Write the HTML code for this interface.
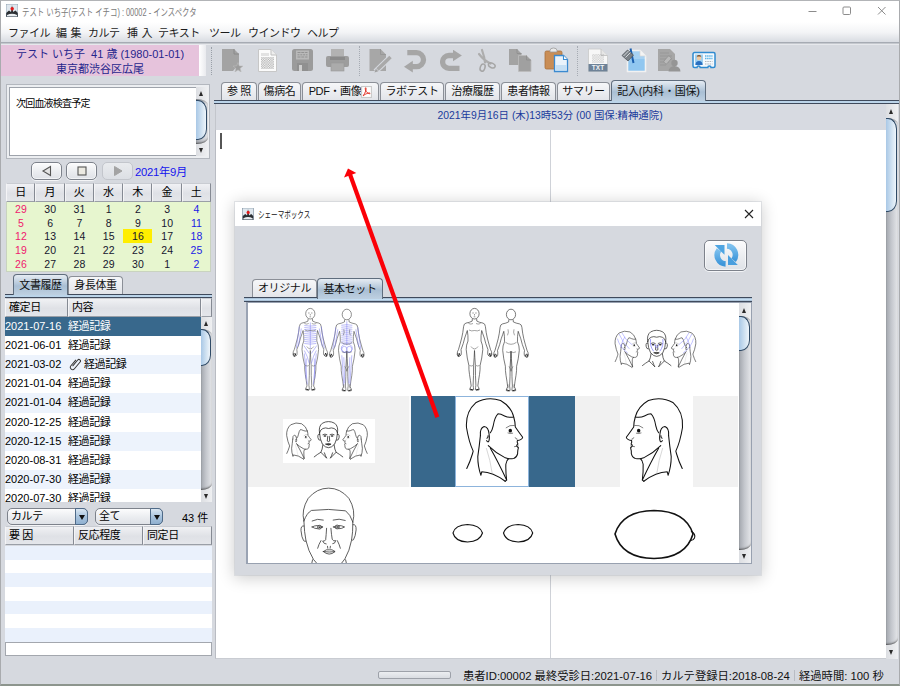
<!DOCTYPE html>
<html lang="ja">
<head>
<meta charset="utf-8">
<title>インスペクタ</title>
<style>
html,body{margin:0;padding:0;}
body{width:900px;height:686px;overflow:hidden;position:relative;background:#d6d9df;
 font-family:"Liberation Sans","Noto Sans CJK JP",sans-serif;font-size:11px;color:#000;}
.abs{position:absolute;}
div,span{box-sizing:border-box;}
#win{position:absolute;left:0;top:0;width:900px;height:686px;border:1px solid #a9abae;border-top:1px solid #b2b4b7;border-bottom:2px solid #8d958d;background:#d6d9df;overflow:hidden;}
#titlebar{position:absolute;left:0;top:0;width:898px;height:22px;background:#fff;}
#titlebar .t{position:absolute;left:21px;top:3px;font-size:10px;color:#7a7a7a;white-space:nowrap;transform-origin:0 0;transform:scaleX(.74);}
#menubar{position:absolute;left:0;top:21px;width:898px;height:23px;background:linear-gradient(#ffffff,#f3f4f6 45%,#d9dce2 86%,#a6abb3 89%,#a6abb3 93%,#e6e8ec 94%);}
#menubar span{position:absolute;top:2px;word-spacing:1.5px;font-size:11px;white-space:nowrap;color:#1c1c1c;letter-spacing:-0.5px;}
#pink{position:absolute;left:0;top:44px;width:198px;height:31px;background:#e6c3dc;color:#26268c;text-align:center;font-size:11px;line-height:15px;padding-top:2px;white-space:nowrap;}
.tab{position:absolute;height:19px;border:1px solid #8b8f97;border-bottom:none;border-radius:4px 4px 0 0;background:linear-gradient(#f6f7f9,#e2e4e9);font-size:11px;text-align:center;line-height:17px;white-space:nowrap;color:#111;letter-spacing:-0.4px;}
.tab.sel{z-index:2;background:linear-gradient(#e6ecf3,#a9bfd4 55%,#bed0e1);border-color:#5f6d7d;}
.tabline{position:absolute;height:4px !important;border-top:1px solid #3f4a5c;border-bottom:1px solid #3f4a5c;background:linear-gradient(#8fa3b9 0,#c4def3 30%,#c4def3 70%,#8fa3b9);}
.hdr{position:absolute;background:linear-gradient(#f0f1f4,#dfe1e6 55%,#e4e6ea);border:1px solid #9a9fa7;border-top-color:#c9ccd2;border-left-color:#f4f4f6;border-right-color:#858a93;font-size:11px;line-height:15px;padding-left:3px;white-space:nowrap;overflow:hidden;letter-spacing:-0.4px;}
.sb{position:absolute;background:linear-gradient(90deg,#dcdee2,#eff0f2);overflow:hidden;}
.sbt{position:absolute;left:0;width:100%;background:linear-gradient(90deg,#a2a6ad,#c4c7cd 45%,#dcdee2 85%,#e6e7ea);border-radius:0 11px 11px 0 / 0 6px 6px 0;box-shadow:inset 0 -2px 2px -1px rgba(40,40,40,.7),inset 0 2px 2px -1px rgba(40,40,40,.35);}
.sbthumb{position:absolute;border:1.3px solid #2f4a66;border-left:none;border-radius:0 9px 9px 0 / 0 11px 11px 0;background:linear-gradient(90deg,#a9c8e6,#cfe1f1 55%,#eef5fb);}
.sbarrow{position:absolute;background:transparent;}
.sbarrow i{position:absolute;left:50%;top:50%;width:0;height:0;border-left:2.8px solid transparent;border-right:2.8px solid transparent;margin-left:-2.8px;}
.sbarrow.up i{border-bottom:5px solid #2a2a2a;margin-top:-2px;}
.sbarrow.dn i{border-top:5px solid #2a2a2a;margin-top:-2.5px;}
.row{position:absolute;left:5px;width:196px;height:19px;line-height:19px;white-space:nowrap;font-size:11px;overflow:hidden;}
.row .d{position:absolute;left:0;top:0;}
.row .c{position:absolute;left:63px;top:0;letter-spacing:-0.4px;}
.cal{position:absolute;font-size:10.5px;text-align:center;width:29px;height:14px;line-height:14px;color:#111;}
.btn{position:absolute;border:1px solid #7d828b;border-radius:5px;background:linear-gradient(#fcfcfd,#eceef1 50%,#dfe2e7);box-shadow:0 1px 0 #f4f5f7,inset 0 0 0 1px rgba(255,255,255,.6);}
.combo{position:absolute;height:17px;border:1px solid #7d828b;border-radius:5px;background:linear-gradient(#fcfcfd,#eceef1 50%,#dfe2e7);box-shadow:0 1px 0 #f4f5f7;font-size:11px;line-height:15px;padding-left:3px;letter-spacing:-0.4px;}
.combo b{box-sizing:border-box;position:absolute;right:-1px;top:-1px;width:13px;height:17px;border:1px solid #4e6a88;border-radius:0 5px 5px 0;background:linear-gradient(#dbe7f2,#a9c4de 50%,#8fb0d0);}
.st{font-size:11.3px;white-space:nowrap;color:#111;}
.combo b i{position:absolute;left:2.5px;top:5.5px;width:0;height:0;border-left:3px solid transparent;border-right:3px solid transparent;border-top:5px solid #111;}
</style>
</head>
<body>
<div id="win">
<div id="titlebar"><svg class="abs" style="left:5px;top:3px" width="12" height="13" viewBox="0 0 12 13"><rect x="0" y="0" width="12" height="13" fill="#dfe7ee"/><path d="M0 13 V9 L3 6.5 L5 8 L6 1 L7.2 8 L9.5 6.5 L12 9 V13 Z" fill="#2b2f33"/><path d="M1 11 Q6 8.5 11 11 L11 12.5 H1Z" fill="#e9eef2"/><circle cx="6.2" cy="4.8" r="1.7" fill="#e01818"/><rect x="0" y="0" width="12" height="13" fill="none" stroke="#7d8fa0" stroke-width=".7"/></svg><span class="t">テスト いち子(テスト イチコ) : 00002 - インスペクタ</span><svg class="abs" style="left:800px;top:0" width="98" height="22" viewBox="0 0 98 22"><g stroke="#8c8c8c" stroke-width="1" fill="none"><path d="M7.5 10.5 H15.5"/><rect x="42" y="6" width="7.5" height="7.5" rx="1"/><path d="M77 6 L84.5 13.5 M84.5 6 L77 13.5"/></g></svg></div>
<div id="menubar"><span style="left:7px">ファイル</span><span style="left:55px">編 集</span><span style="left:87px">カルテ</span><span style="left:126px">挿 入</span><span style="left:157px">テキスト</span><span style="left:208px">ツール</span><span style="left:247px">ウインドウ</span><span style="left:306px">ヘルプ</span></div>
<div id="pink">テスト いち子&nbsp; 41 歳 (1980-01-01)<br>東京都渋谷区広尾</div>
<div class="abs" style="left:198px;top:44px;width:7px;height:31px;background:linear-gradient(90deg,#fff,#e9eaee)"></div>
<div class="abs" style="left:210px;top:46px;width:0;height:28px;border-left:1px dotted #9aa0a8"></div>
<div class="abs" style="left:5px;top:83px;width:204px;height:75px;border:1px solid #b3b7be;background:#eceef1;padding:2px"><div style="width:100%;height:100%;border:1px solid #9ea3ab;background:#fff"></div></div>
<div class="abs" style="left:15px;top:94px;font-size:10px;letter-spacing:-0.8px;white-space:nowrap">次回血液検査予定</div>
<div class="sb" style="left:195px;top:86px;width:12px;height:69px"><div class="sbt" style="top:12px;height:45px"></div><div class="sbarrow up" style="left:0;top:0;width:12px;height:12px"><i></i></div><div class="sbarrow dn" style="left:0;top:57px;width:12px;height:12px"><i></i></div><div class="sbthumb" style="left:0;top:13px;width:11px;height:40px"></div></div>
<div class="btn" style="left:30px;top:161px;width:31px;height:18px;"><svg class="abs" style="left:9px;top:2px" width="12" height="12"><path d="M9.5 1.5 L2 6 L9.5 10.5 Z" fill="#e4e4e4" stroke="#555" stroke-width="1.1"/></svg></div><div class="btn" style="left:65px;top:161px;width:31px;height:18px;"><svg class="abs" style="left:9px;top:2px" width="12" height="12"><rect x="2" y="2" width="8" height="8" fill="#eceae2" stroke="#555" stroke-width="1.1"/></svg></div><div class="btn" style="left:101px;top:161px;width:31px;height:18px;border-color:#c3c6cc;box-shadow:none;background:linear-gradient(#e9ebee,#dcdfe4);"><svg class="abs" style="left:9px;top:2px" width="12" height="12"><path d="M2.5 1.5 L10 6 L2.5 10.5 Z" fill="#a3a3a3" stroke="#a3a3a3"/></svg></div><div class="abs" style="left:134px;top:162px;font-size:11.3px;color:#1515ee;white-space:nowrap;letter-spacing:-0.3px">2021年9月</div>
<div class="hdr" style="left:5px;top:182px;width:29.25px;height:19px;text-align:center;padding:0;line-height:17px;font-size:11px">日</div><div class="hdr" style="left:34.25px;top:182px;width:29.25px;height:19px;text-align:center;padding:0;line-height:17px;font-size:11px">月</div><div class="hdr" style="left:63.5px;top:182px;width:29.25px;height:19px;text-align:center;padding:0;line-height:17px;font-size:11px">火</div><div class="hdr" style="left:92.75px;top:182px;width:29.25px;height:19px;text-align:center;padding:0;line-height:17px;font-size:11px">水</div><div class="hdr" style="left:122px;top:182px;width:29.25px;height:19px;text-align:center;padding:0;line-height:17px;font-size:11px">木</div><div class="hdr" style="left:151.25px;top:182px;width:29.25px;height:19px;text-align:center;padding:0;line-height:17px;font-size:11px">金</div><div class="hdr" style="left:180.5px;top:182px;width:29.25px;height:19px;text-align:center;padding:0;line-height:17px;font-size:11px">土</div>
<div class="abs" style="left:5px;top:201px;width:205px;height:70px;background:#e7f6cf;border:1px solid #c9d3bf;border-top:none"></div>
<div class="cal" style="left:5.4px;top:201px;color:#f0196e;">29</div><div class="cal" style="left:34.65px;top:201px;color:#15152e;">30</div><div class="cal" style="left:63.9px;top:201px;color:#15152e;">31</div><div class="cal" style="left:93.15px;top:201px;color:#15152e;">1</div><div class="cal" style="left:122.4px;top:201px;color:#15152e;">2</div><div class="cal" style="left:151.65px;top:201px;color:#15152e;">3</div><div class="cal" style="left:180.9px;top:201px;color:#1a1ae6;">4</div><div class="cal" style="left:5.4px;top:214.7px;color:#f0196e;">5</div><div class="cal" style="left:34.65px;top:214.7px;color:#15152e;">6</div><div class="cal" style="left:63.9px;top:214.7px;color:#15152e;">7</div><div class="cal" style="left:93.15px;top:214.7px;color:#15152e;">8</div><div class="cal" style="left:122.4px;top:214.7px;color:#15152e;">9</div><div class="cal" style="left:151.65px;top:214.7px;color:#15152e;">10</div><div class="cal" style="left:180.9px;top:214.7px;color:#1a1ae6;">11</div><div class="cal" style="left:5.4px;top:228.4px;color:#f0196e;">12</div><div class="cal" style="left:34.65px;top:228.4px;color:#15152e;">13</div><div class="cal" style="left:63.9px;top:228.4px;color:#15152e;">14</div><div class="cal" style="left:93.15px;top:228.4px;color:#15152e;">15</div><div class="cal" style="left:122.4px;top:228.4px;color:#15152e;background:#ffee00;">16</div><div class="cal" style="left:151.65px;top:228.4px;color:#15152e;">17</div><div class="cal" style="left:180.9px;top:228.4px;color:#1a1ae6;">18</div><div class="cal" style="left:5.4px;top:242.1px;color:#f0196e;">19</div><div class="cal" style="left:34.65px;top:242.1px;color:#15152e;">20</div><div class="cal" style="left:63.9px;top:242.1px;color:#15152e;">21</div><div class="cal" style="left:93.15px;top:242.1px;color:#15152e;">22</div><div class="cal" style="left:122.4px;top:242.1px;color:#15152e;">23</div><div class="cal" style="left:151.65px;top:242.1px;color:#15152e;">24</div><div class="cal" style="left:180.9px;top:242.1px;color:#1a1ae6;">25</div><div class="cal" style="left:5.4px;top:255.8px;color:#f0196e;">26</div><div class="cal" style="left:34.65px;top:255.8px;color:#15152e;">27</div><div class="cal" style="left:63.9px;top:255.8px;color:#15152e;">28</div><div class="cal" style="left:93.15px;top:255.8px;color:#15152e;">29</div><div class="cal" style="left:122.4px;top:255.8px;color:#15152e;">30</div><div class="cal" style="left:151.65px;top:255.8px;color:#15152e;">1</div><div class="cal" style="left:180.9px;top:255.8px;color:#1a1ae6;">2</div>
<div class="tab sel" style="left:12px;top:273px;width:55px;height:21px;line-height:20px">文書履歴</div><div class="tab" style="left:67px;top:275px;width:55px;height:18px">身長体重</div><div class="tabline" style="left:4px;top:293px;width:207px"></div>
<div class="hdr" style="left:4px;top:297px;width:63px;height:19px;line-height:16px">確定日</div><div class="hdr" style="left:67px;top:297px;width:133px;height:19px;line-height:16px">内容</div><div class="hdr" style="left:200px;top:297px;width:11px;height:19px;padding:0"></div>
<div class="abs" style="left:4px;top:316px;width:196px;height:185px;background:#fff;overflow:hidden"><div class="row" style="left:0;top:0px;height:19.2px;background:#38688c;color:#fff;"><span class="d">2021-07-16</span><span class="c">経過記録</span></div><div class="row" style="left:0;top:19.1px;height:19.2px;"><span class="d">2021-06-01</span><span class="c">経過記録</span></div><div class="row" style="left:0;top:38.2px;height:19.2px;background:#edf3fc;"><span class="d">2021-03-02</span><span class="c"><svg style="vertical-align:-3px;margin-left:1px;margin-right:3px" width="12" height="13" viewBox="0 0 12 13"><g transform="translate(6 6.5) rotate(40)"><path d="M-2.3 -4.2 V3.6 a2.3 2.3 0 0 0 4.6 0 V-5.2 a1.55 1.55 0 0 0 -3.1 0 V2.8" fill="none" stroke="#333" stroke-width="1"/></g></svg>経過記録</span></div><div class="row" style="left:0;top:57.3px;height:19.2px;"><span class="d">2021-01-04</span><span class="c">経過記録</span></div><div class="row" style="left:0;top:76.4px;height:19.2px;background:#edf3fc;"><span class="d">2021-01-04</span><span class="c">経過記録</span></div><div class="row" style="left:0;top:95.5px;height:19.2px;"><span class="d">2020-12-25</span><span class="c">経過記録</span></div><div class="row" style="left:0;top:114.6px;height:19.2px;background:#edf3fc;"><span class="d">2020-12-15</span><span class="c">経過記録</span></div><div class="row" style="left:0;top:133.7px;height:19.2px;"><span class="d">2020-08-31</span><span class="c">経過記録</span></div><div class="row" style="left:0;top:152.8px;height:19.2px;background:#edf3fc;"><span class="d">2020-07-30</span><span class="c">経過記録</span></div><div class="row" style="left:0;top:171.9px;height:19.2px;"><span class="d">2020-07-30</span><span class="c">経過記録</span></div></div>
<div class="sb" style="left:200px;top:316px;width:11px;height:185px"><div class="sbt" style="top:12px;height:161px"></div><div class="sbarrow up" style="left:0;top:0;width:11px;height:12px"><i></i></div><div class="sbarrow dn" style="left:0;top:173px;width:11px;height:12px"><i></i></div><div class="sbthumb" style="left:0;top:12px;width:10px;height:37px"></div></div>
<div class="combo" style="left:6px;top:507px;width:81px">カルテ<b><i></i></b></div><div class="combo" style="left:94px;top:507px;width:68px">全て<b><i></i></b></div><div class="abs" style="left:181px;top:508px;font-size:11px;white-space:nowrap">43 件</div>
<div class="hdr" style="left:4px;top:525px;width:69px;height:19px;line-height:17px">要 因</div><div class="hdr" style="left:73px;top:525px;width:69px;height:19px;line-height:17px">反応程度</div><div class="hdr" style="left:142px;top:525px;width:69px;height:19px;line-height:17px">同定日</div>
<div class="abs" style="left:4px;top:545px;width:207px;height:96px;background:repeating-linear-gradient(#eaf1fc 0,#eaf1fc 13.7px,#fff 13.7px,#fff 27.4px)"></div>
<div class="abs" style="left:4px;top:641px;width:207px;height:14px;border:1px solid #a3a7ae;background:#fff"></div>
<svg class="abs" style="left:220px;top:47px" width="23" height="24" viewBox="0 0 23 24"><path d="M1 1 H13 L18 6 V16 L12 23 H1 Z" fill="#a3a3a3"/><path d="M13 1 V6 H18" fill="none" stroke="#8a8a8a"/><path d="M17 14.5 L18.3 17.9 L21.9 18.1 L19.1 20.4 L20.1 23.9 L17 21.9 L13.9 23.9 L14.9 20.4 L12.1 18.1 L15.7 17.9 Z" fill="#9c9c9c" stroke="#bcbcbc" stroke-width=".6"/></svg><svg class="abs" style="left:256px;top:47px" width="21" height="25" viewBox="0 0 21 25"><defs><pattern id="chk" width="2.4" height="2.4" patternUnits="userSpaceOnUse"><rect width="1.2" height="1.2" fill="#9c9c9c"/><rect x="1.2" y="1.2" width="1.2" height="1.2" fill="#9c9c9c"/></pattern></defs><path d="M1.5 1.5 H14 L19.5 7 V23.5 H1.5 Z" fill="#fbfbfb" stroke="#c7c7c7"/><path d="M14 1.5 V7 H19.5" fill="#eee" stroke="#c0c0c0"/><path d="M4 5 H12 V8 H4Z" fill="#e2e2e2"/><rect x="4" y="9" width="13" height="12" fill="url(#chk)" opacity=".8"/></svg><svg class="abs" style="left:290px;top:47px" width="23" height="24" viewBox="0 0 23 24"><rect x="1" y="1" width="21" height="22" rx="2.5" fill="#9b9b9b"/><rect x="5" y="2.5" width="13" height="9" fill="#b9b9b9"/><path d="M6.5 4.5 H16.5 M6.5 9 H16.5" stroke="#8e8e8e" stroke-width=".9" stroke-dasharray="3 .8"/><path d="M6.5 6.8 H16.5" stroke="#8e8e8e" stroke-width=".9" stroke-dasharray="2 .8"/><rect x="6" y="15" width="11" height="8" fill="#909090"/><rect x="8" y="17" width="3" height="6" fill="#cfcfcf"/></svg><svg class="abs" style="left:324px;top:47px" width="25" height="24" viewBox="0 0 25 24"><rect x="6" y="1" width="13" height="8" fill="#b2b2b2"/><rect x="1" y="8" width="23" height="11" rx="2" fill="#9d9d9d"/><rect x="5" y="9" width="15" height="3" fill="#8a8a8a"/><rect x="6" y="15" width="13" height="8" fill="#ababab" stroke="#989898" stroke-width=".6"/></svg><div class="abs" style="left:358px;top:45px;width:0;height:30px;border-left:1px dotted #a6abb3"></div><svg class="abs" style="left:368px;top:47px" width="24" height="25" viewBox="0 0 24 25"><path d="M0.5 1 H11.5 L17 6.5 V23 H0.5 Z" fill="#a7a7a7"/><path d="M11.5 1 V6.5 H17" fill="none" stroke="#949494" stroke-width=".8"/><path d="M6.5 23.5 L21.5 9" stroke="#d6d9df" stroke-width="5.5"/><path d="M8.5 21.5 L21.5 9" stroke="#a9a9a9" stroke-width="3.4"/><path d="M5.5 24.5 L6.8 20.8 L9.3 23.3 Z" fill="#a0a0a0"/></svg><svg class="abs" style="left:403.2px;top:48.7px" width="23" height="23" viewBox="0 0 23 23"><path d="M3.3 2.7 H12.5 A7 7 0 0 1 12.5 16.7 H8" fill="none" stroke="#a6a6a6" stroke-width="5.3"/><path d="M0 16.7 L8.8 10.8 V22.6 Z" fill="#a6a6a6"/></svg><svg class="abs" style="left:438.7px;top:48.7px" width="23" height="23" viewBox="0 0 23 23"><path d="M19.5 18.3 H9 A6.4 6.4 0 0 1 9 5.5 H14" fill="none" stroke="#a6a6a6" stroke-width="5.3"/><path d="M21.9 5.5 L13 -0.3 V11.3 Z" fill="#a6a6a6"/></svg><svg class="abs" style="left:474px;top:47px" width="21" height="25" viewBox="0 0 21 25"><path d="M7 2 Q9.5 9 10 14.5 M4 6 Q9 12.5 15.5 15.5" fill="none" stroke="#adadad" stroke-width="2.2" stroke-linecap="round"/><ellipse cx="7.6" cy="19.6" rx="2.3" ry="3.7" fill="none" stroke="#a6a6a6" stroke-width="1.5" transform="rotate(20 7.6 19.6)"/><ellipse cx="16.8" cy="17.4" rx="3.5" ry="2.3" fill="none" stroke="#a6a6a6" stroke-width="1.5" transform="rotate(25 16.8 17.4)"/></svg><svg class="abs" style="left:507px;top:47px" width="24" height="24" viewBox="0 0 24 24"><path d="M1 1 H9 L13.5 5.5 V17 H1 Z" fill="#a3a3a3"/><path d="M9 1 V5.5 H13.5" fill="none" stroke="#8d8d8d" stroke-width=".8"/><path d="M10.5 7.5 H18.5 L23 12 V23.5 H10.5 Z" fill="#a0a0a0" stroke="#bdbdbd" stroke-width=".8"/><path d="M18.5 7.5 V12 H23" fill="none" stroke="#8d8d8d" stroke-width=".8"/></svg><svg class="abs" style="left:543px;top:46px" width="25" height="26" viewBox="0 0 25 26"><rect x="1" y="4" width="17" height="18" rx="1.5" fill="#c98d55" stroke="#a86f3a" stroke-width=".8"/><path d="M6 5 V3.5 a3.5 2.5 0 0 1 7 0 V5 Z" fill="#e9e9e9" stroke="#9a9a9a" stroke-width=".8"/><path d="M10.5 8.5 H19.5 L23.5 12.5 V24.5 H10.5 Z" fill="#eaf3fb" stroke="#3b8ad0" stroke-width="1.3"/><path d="M19.5 8.5 V12.5 H23.5" fill="#fff" stroke="#3b8ad0" stroke-width="1.1"/><path d="M11.5 18 H22.5 V23.5 H11.5Z" fill="#bcd9f2" opacity=".8"/></svg><div class="abs" style="left:576px;top:45px;width:0;height:30px;border-left:1px dotted #a6abb3"></div><svg class="abs" style="left:586px;top:47px" width="22" height="24" viewBox="0 0 22 24"><path d="M1.5 1 H14 L20.5 7.5 V23.5 H1.5 Z" fill="#f7f7f7" stroke="#c9c9c9" stroke-width=".8"/><path d="M14 1 V7.5 H20.5" fill="#e6e6e6" stroke="#bdbdbd" stroke-width=".8"/><rect x="5" y="6" width="12" height="9" fill="url(#chk)" opacity=".45"/><rect x="1.5" y="16" width="19" height="7.5" fill="#6e8297"/><text x="11" y="22.3" font-family="Liberation Sans,sans-serif" font-size="6.5" font-weight="bold" fill="#eef2f6" text-anchor="middle">TXT</text></svg><svg class="abs" style="left:620px;top:46px" width="26" height="26" viewBox="0 0 26 26"><path d="M6.5 3.5 H19 L24.5 9 V24.5 H6.5 Z" fill="#a7d2f3" stroke="#f2f2f2" stroke-width="1.6"/><path d="M7.5 12 H23.5 V23.5 H7.5Z" fill="#7fbdec" opacity=".55"/><path d="M19 3.5 V9 H24.5" fill="#f4f4f4" stroke="#d5d5d5" stroke-width=".7"/><path d="M9.5 1.5 L11 9 L12.5 16" fill="none" stroke="#1b5fae" stroke-width="2"/><path d="M1 8.5 L6.5 3 L12.5 8 L7 14 Z" fill="#7b8187" stroke="#51565c" stroke-width=".8"/><path d="M2.5 9 L7.5 4 M4.5 10.5 L9.5 5.5" stroke="#d4d7da" stroke-width="1"/></svg><svg class="abs" style="left:656px;top:47px" width="24" height="24" viewBox="0 0 24 24"><path d="M1 1 H13 L18 6 V23 H1 Z" fill="#a6a6a6"/><path d="M3 5 H12 M3 8 H15 M3 11 H15 M3 14 H12 M3 17 H9" stroke="#989898" stroke-width="1"/><rect x="8.5" y="8" width="4" height="8" rx="1" fill="#b9b9b9" stroke="#8f8f8f" stroke-width=".7" transform="rotate(40 10.5 12)"/><circle cx="17.5" cy="15" r="3.2" fill="#959595"/><path d="M11.5 23.5 a6 5.5 0 0 1 12 0 Z" fill="#959595"/></svg><svg class="abs" style="left:691px;top:50px" width="24" height="19" viewBox="0 0 24 19"><path d="M2.5 1.5 H21.5 a1.5 1.5 0 0 1 1.5 1.5 V15 a1.5 1.5 0 0 1 -1.5 1.5 H19 a1.6 1.6 0 0 0 -3.2 0 H8.2 a1.6 1.6 0 0 0 -3.2 0 H2.5 a1.5 1.5 0 0 1 -1.5 -1.5 V3 a1.5 1.5 0 0 1 1.5 -1.5 Z" fill="#f4f9fd" stroke="#2f8bd0" stroke-width="1.5"/><rect x="3" y="3.5" width="8" height="10.5" fill="#9fd0f0"/><circle cx="7" cy="7" r="2.3" fill="#f0c9a0"/><path d="M4.6 6.5 a2.4 2.4 0 0 1 4.8 0 L8.6 5.6 H5.4Z" fill="#7a4a22"/><path d="M3.5 14 a3.5 4 0 0 1 7 0 Z" fill="#2a6fc0"/><path d="M13 5 H20.5 M13 7.5 H20.5" stroke="#59b3e6" stroke-width="1.3" stroke-dasharray="1.5 .6"/><path d="M13 10.5 H20.5 M13 13 H20.5" stroke="#b0b6bc" stroke-width="1" stroke-dasharray="1.5 .8"/></svg>
<div class="tab" style="left:220px;top:81px;width:36px;height:18px">参 照</div><div class="tab" style="left:257px;top:81px;width:43px;height:18px">傷病名</div><div class="tab" style="left:301px;top:81px;width:77px;height:18px">PDF・画像<svg style="vertical-align:-2.5px;margin-left:0" width="11" height="12" viewBox="0 0 10 11"><rect x=".5" y=".5" width="9" height="10" fill="#fff" stroke="#c9c9c9"/><path d="M2 9 C4 6 5 3 4.5 1.8 C4 1 3.3 2.5 4.6 4.8 C5.8 6.8 8 7.5 8.3 6.8 C8.5 6 5 6.3 2 9Z" fill="none" stroke="#e02b20" stroke-width=".9"/></svg></div><div class="tab" style="left:379px;top:81px;width:64px;height:18px">ラボテスト</div><div class="tab" style="left:444px;top:81px;width:55px;height:18px">治療履歴</div><div class="tab" style="left:500px;top:81px;width:55px;height:18px">患者情報</div><div class="tab" style="left:556px;top:81px;width:53px;height:18px">サマリー</div><div class="tab sel" style="left:610px;top:79px;width:95px;height:21px;letter-spacing:-0.2px;line-height:20px">記入(内科・国保)</div><div class="tabline" style="left:213px;top:99px;width:685px"></div>
<div class="abs" style="left:214px;top:103px;width:671px;height:26px;background:#d7dae1;border-left:1px solid #c3c6cc"></div><div class="abs" style="left:214px;top:129px;width:671px;height:529px;background:#fff;border-left:1px solid #b9bcc3;border-bottom:1px solid #c9ccd2"></div><div class="abs" id="hdt" style="left:434px;top:106px;width:230px;text-align:center;font-size:10.4px;color:#1a3a9c;white-space:nowrap">2021年9月16日 (木)13時53分 (00 国保:精神通院)</div><div class="abs" style="left:549px;top:129px;width:1px;height:528px;background:#cfd2d8"></div><div class="abs" style="left:219px;top:132px;width:1.5px;height:16px;background:#555"></div>
<div class="sb" style="left:885px;top:103px;width:12px;height:555px"><div class="sbt" style="top:14px;height:527px"></div><div class="sbarrow up" style="left:0;top:0;width:12px;height:14px"><i></i></div><div class="sbarrow dn" style="left:0;top:541px;width:12px;height:14px"><i></i></div><div class="sbthumb" style="left:0;top:14px;width:11px;height:94px"></div></div>
<div class="abs" style="left:377px;top:670px;width:73px;height:8px;border:1px solid #9da1a9;border-radius:2px;background:linear-gradient(#eceef1,#d9dce1)"></div><div class="abs st" style="left:462px;top:666px">患者ID:00002 最終受診日:2021-07-16</div><div class="abs" style="left:655px;top:669px;width:1px;height:11px;background:#b9bcc3"></div><div class="abs st" style="left:660px;top:666px">カルテ登録日:2018-08-24</div><div class="abs" style="left:793px;top:669px;width:1px;height:11px;background:#b9bcc3"></div><div class="abs st" style="left:798px;top:666px">経過時間: 100 秒</div>
<div id="dlg" class="abs" style="left:234px;top:201px;width:526px;height:373px;background:#d6d9df;box-shadow:0 0 0 1px rgba(170,175,185,.28),0 2px 15px 1px rgba(0,0,0,.2)"><div class="abs" style="left:0;top:0;width:526px;height:24px;background:#fff"></div><svg class="abs" style="left:7px;top:6px" width="12" height="12" viewBox="0 0 12 13"><rect x="0" y="0" width="12" height="13" fill="#dfe7ee"/><path d="M0 13 V9 L3 6.5 L5 8 L6 1 L7.2 8 L9.5 6.5 L12 9 V13 Z" fill="#2b2f33"/><path d="M1 11 Q6 8.5 11 11 L11 12.5 H1Z" fill="#e9eef2"/><circle cx="6.2" cy="4.8" r="1.7" fill="#e01818"/><rect x="0" y="0" width="12" height="13" fill="none" stroke="#7d8fa0" stroke-width=".7"/></svg><span class="abs" id="dlgt" style="left:23px;top:5px;font-size:9.5px;color:#111;white-space:nowrap;transform-origin:0 0;transform:scaleX(.69)">シェーマボックス</span><svg class="abs" style="left:509px;top:7px" width="10" height="10" viewBox="0 0 10 10"><path d="M1 1 L9 9 M9 1 L1 9" stroke="#222" stroke-width="1.1"/></svg><div class="btn" style="left:469px;top:38px;width:43px;height:31px"><svg class="abs" style="left:8.8px;top:2.3px" width="25" height="25" viewBox="0 0 25 25"><defs><linearGradient id="rg" x1="0" y1="0" x2="0" y2="1"><stop offset="0" stop-color="#7cc0ee"/><stop offset="1" stop-color="#3f97da"/></linearGradient></defs><g fill="none" stroke="url(#rg)" stroke-width="5.6"><path d="M11.6 20.9 A8.6 8.8 0 0 1 5 6.8"/><path d="M13 3 A8.6 8.8 0 0 1 19.6 17.2"/></g><path d="M0.7 2 H10.5 V11.8 L7 8.5 Z" fill="#4fa5e2"/><path d="M23.8 21.9 H14 V12.1 L17.5 15.4 Z" fill="#4a9fde"/></svg></div><div class="tab" style="left:17px;top:76.5px;width:65px">オリジナル</div><div class="tab sel" style="left:82px;top:75.5px;width:66px;height:21px;line-height:20px">基本セット</div><div class="tabline" style="left:9px;top:95.3px;width:508px;height:4.5px !important;border-bottom-width:1.5px"></div><div class="abs" style="left:11px;top:100px;width:506px;height:262px;background:#fff;border:1px solid #98a1b0;border-left:2px solid #9aa3b3;overflow:hidden"><div class="abs" style="left:0;top:92.5px;width:490px;height:91px;background:#f1f1f1"></div><div class="abs" style="left:161px;top:92.5px;width:2px;height:91px;background:#fafafa"></div><div class="abs" style="left:163px;top:92.5px;width:164px;height:91px;background:#38688c"></div><div class="abs" style="left:207px;top:92.5px;width:74px;height:91px;background:#fff;border:1px solid #8db4dc"></div><div class="abs" style="left:372px;top:92.5px;width:73px;height:91px;background:#fff"></div><div class="abs" style="left:35px;top:116px;width:92px;height:44px;background:#fff"></div><svg class="abs" style="left:0;top:0" width="490" height="260" viewBox="248 303 490 260"><defs><g id="bodyo" fill="none"><path d="M-16.8 45 L-15.8 48 M-15.5 44.5 L-14.3 47.2 M16.8 45 L15.8 48 M15.5 44.5 L14.3 47.2 M-4.5 80.5 L-1.5 81.5 M4.5 80.5 L1.5 81.5" stroke="#222" stroke-width="1"/><ellipse cx="0" cy="5.2" rx="4.6" ry="5.3"/><path d="M-2.2 10.3 L-2.3 12.6 Q-5 14 -8.5 14.6 Q-10.6 15 -10.9 18 Q-11.5 24 -12.8 29.5 Q-14.5 36 -16 41 Q-17.4 43 -17.3 46 Q-16.8 48.6 -15.6 48 Q-14.5 47.8 -13.3 46 Q-13 43.5 -13.5 41.2 Q-11 35 -9.8 29.5 Q-8.2 25 -7.2 22 Q-6.3 27 -6.5 32.5 Q-8.4 36.5 -8.3 41 Q-7.5 50 -5.6 57 Q-5.8 61 -5 66 Q-4 72 -3.3 77.5 Q-5 80 -4.7 81.3 Q-2.5 82.3 -0.9 81.2 Q-1 79 -1.4 76.8 Q-0.8 67 -0.9 57 Q-0.3 49 0 42"/><path d="M-2.2 10.3 L-2.3 12.6 Q-5 14 -8.5 14.6 Q-10.6 15 -10.9 18 Q-11.5 24 -12.8 29.5 Q-14.5 36 -16 41 Q-17.4 43 -17.3 46 Q-16.8 48.6 -15.6 48 Q-14.5 47.8 -13.3 46 Q-13 43.5 -13.5 41.2 Q-11 35 -9.8 29.5 Q-8.2 25 -7.2 22 Q-6.3 27 -6.5 32.5 Q-8.4 36.5 -8.3 41 Q-7.5 50 -5.6 57 Q-5.8 61 -5 66 Q-4 72 -3.3 77.5 Q-5 80 -4.7 81.3 Q-2.5 82.3 -0.9 81.2 Q-1 79 -1.4 76.8 Q-0.8 67 -0.9 57 Q-0.3 49 0 42" transform="scale(-1,1)"/></g><g id="shead" fill="none" stroke-linecap="round" stroke-linejoin="round"><path d="M82 552 Q108 500 125 442 L131 420 Q98 350 80 240 Q72 120 150 52 Q240 0 340 34 Q420 80 440 160 Q452 200 452 236 Q475 270 508 314 Q506 332 468 340 Q464 352 472 366 Q452 378 476 394 Q468 420 470 440 Q462 470 440 476 Q415 480 400 478 Q385 488 380 520 Q378 580 386 640 L375 650"/><path d="M440 160 Q400 168 370 152 Q340 136 320 136 Q295 160 284 225 Q276 262 262 280"/><path d="M186 302 Q180 245 214 232 Q248 236 252 290 Q258 330 248 348 Q238 352 234 340 M236 322 Q246 318 244 304"/><path d="M246 378 Q300 432 370 468 Q390 476 402 478"/><path d="M186 302 Q178 380 166 462 Q166 540 190 604 L196 578 Q280 580 375 650"/><path d="M262 398 Q320 500 386 640"/><path d="M232 400 Q262 490 275 584" stroke-width="3" stroke="#999"/><path d="M382 242 Q410 218 444 224 M396 282 Q415 290 432 284" stroke-width="4"/><ellipse cx="414" cy="264" rx="13" ry="15" fill="#111" stroke="none"/><path d="M452 318 Q456 330 466 330" stroke-width="4.5"/><path d="M446 386 L474 381" stroke-width="4.5"/></g><g id="fhead" fill="none" stroke-linecap="round" stroke-linejoin="round"><path d="M-88 105 Q-100 40 -60 10 Q0 -22 60 10 Q100 40 88 105"/><path d="M-88 105 Q-80 70 -55 62 Q-30 50 0 62 Q30 50 55 62 Q80 70 88 105"/><path d="M-88 105 Q-84 170 -60 215 Q-30 250 0 250 Q30 250 60 215 Q84 170 88 105"/><path d="M-88 120 Q-108 110 -104 150 Q-100 180 -82 178 M88 120 Q108 110 104 150 Q100 180 82 178"/><path d="M-55 122 Q-35 110 -15 122 M15 122 Q35 110 55 122"/><ellipse cx="-35" cy="135" rx="14" ry="7" fill="#222" stroke="none"/><ellipse cx="35" cy="135" rx="14" ry="7" fill="#222" stroke="none"/><path d="M-8 140 L-12 185 Q0 195 12 185 L8 140"/><path d="M-25 215 Q0 205 25 215 Q0 235 -25 215Z" fill="#555"/><path d="M-55 222 Q-60 270 -75 295 Q-110 315 -140 340 M55 222 Q60 270 75 295 Q110 315 140 340"/><path d="M-40 300 Q-30 330 -20 350 M40 300 Q30 330 20 350 M-75 295 Q-50 320 -20 350 M75 295 Q50 320 20 350"/></g></defs><g transform="translate(310.3 308.5)" stroke="#444" stroke-width="0.6"><use href="#bodyo"/><g stroke="#7a7af0" stroke-width=".5" fill="none"><path d="M-6 17 Q0 18.2 6 17"/><path d="M-6 19 Q0 20.2 6 19"/><path d="M-6 21 Q0 22.2 6 21"/><path d="M-6 23 Q0 24.2 6 23"/><path d="M-6 25 Q0 26.2 6 25"/><path d="M-6 27 Q0 28.2 6 27"/><path d="M-6 29 Q0 30.2 6 29"/><path d="M-6 31 Q0 32.2 6 31"/><path d="M-6 33 Q0 34.2 6 33"/><path d="M-6 35 Q0 36.2 6 35"/><path d="M0 14 V40 M-6.5 37 L-1 45 M6.5 37 L1 45 M-11 18 L-14 40 M11 18 L14 40 M-9 20 L-12 38 M9 20 L12 38 M-6 45 L-3 76 M6 45 L3 76 M-4 50 L-4.5 70 M4 50 L4.5 70 M-6 42 Q-3 47 -1 55 M6 42 Q3 47 1 55"/></g><path d="M-2.2 4.5 h1.5 M0.7 4.5 h1.5 M-0.8 8.3 h1.6 M0 5.5 v1.5" stroke-width=".5" fill="none"/><path d="M-5.5 21.5 Q-3 23 0 22 Q3 23 5.5 21.5 M-3.5 38 Q0 43 3.5 38 M-6 15 Q-3.5 16.2 -1.5 15 M6 15 Q3.5 16.2 1.5 15 M-5 57 Q-3 58 -1.5 57 M5 57 Q3 58 1.5 57" stroke-width=".45" fill="none"/></g><g transform="translate(346.8 309.3)" stroke="#444" stroke-width="0.6"><use href="#bodyo"/><g stroke="#7a7af0" stroke-width=".5" fill="none"><path d="M-5.5 16 Q0 14.8 5.5 16"/><path d="M-5.5 18 Q0 16.8 5.5 18"/><path d="M-5.5 20 Q0 18.8 5.5 20"/><path d="M-5.5 22 Q0 20.8 5.5 22"/><path d="M-5.5 24 Q0 22.8 5.5 24"/><path d="M-5.5 26 Q0 24.8 5.5 26"/><path d="M-5.5 28 Q0 26.8 5.5 28"/><path d="M-5.5 30 Q0 28.8 5.5 30"/><path d="M-5.5 32 Q0 30.8 5.5 32"/><path d="M-5.5 34 Q0 32.8 5.5 34"/><path d="M0 12 V36 M-11 18 L-14 40 M11 18 L14 40 M-9 20 L-12 38 M9 20 L12 38 M-5 46 L-3 76 M5 46 L3 76 M-3 48 L-2 74 M3 48 L2 74"/><ellipse cx="-2.5" cy="40" rx="2.6" ry="3"/><ellipse cx="2.5" cy="40" rx="2.6" ry="3"/><ellipse cx="0" cy="39" rx="5.5" ry="4.5"/></g><path d="M-3 20 Q-2 23 -3.5 26 M3 20 Q2 23 3.5 26 M-5.5 33 Q0 37 5.5 33 M-5 42.5 Q-2.5 44 0 42.5 Q2.5 44 5 42.5 M0 42 V58 M-2 57 Q0 60 0 62 M2 57 Q0 60 0 62 M-3 75 v4 M3 75 v4" stroke-width=".45" fill="none"/></g><g transform="translate(474.5 308.5)" stroke="#333" stroke-width="0.65"><use href="#bodyo"/><path d="M-2.2 4.5 h1.5 M0.7 4.5 h1.5 M-0.8 8.3 h1.6 M0 5.5 v1.5" stroke-width=".5" fill="none"/><path d="M-5.5 21.5 Q-3 23 0 22 Q3 23 5.5 21.5 M-3.5 38 Q0 43 3.5 38 M-6 15 Q-3.5 16.2 -1.5 15 M6 15 Q3.5 16.2 1.5 15 M-5 57 Q-3 58 -1.5 57 M5 57 Q3 58 1.5 57" stroke-width=".45" fill="none"/></g><g transform="translate(511 309.3)" stroke="#333" stroke-width="0.65"><use href="#bodyo"/><path d="M-3 20 Q-2 23 -3.5 26 M3 20 Q2 23 3.5 26 M-5.5 33 Q0 37 5.5 33 M-5 42.5 Q-2.5 44 0 42.5 Q2.5 44 5 42.5 M0 42 V58 M-2 57 Q0 60 0 62 M2 57 Q0 60 0 62 M-3 75 v4 M3 75 v4" stroke-width=".45" fill="none"/></g><g transform="translate(456 396) scale(0.1312 0.1312)" stroke="#111" stroke-width="8"><use href="#shead"/></g><g transform="translate(693 396) scale(-0.1312 0.1312)" stroke="#111" stroke-width="8"><use href="#shead"/></g><g transform="translate(282.1 421.8) scale(0.0573 0.0573)" stroke="#222" stroke-width="11"><use href="#shead"/></g><g transform="translate(328.5 422.2) scale(0.102)" stroke="#222" stroke-width="7.4"><use href="#fhead"/></g><g transform="translate(371.9 421.8) scale(-0.0573 0.0573)" stroke="#222" stroke-width="11"><use href="#shead"/></g><g transform="translate(610.5 330) scale(0.0573 0.0573)" stroke="#333" stroke-width="11"><use href="#shead"/><g stroke="#8a8aff" stroke-width="9" fill="none"><path d="M150 70 Q200 200 330 330 M200 50 Q260 180 380 260 M120 150 Q160 300 300 400 M250 120 Q200 200 180 300"/></g></g><g transform="translate(656.7 330.9) scale(0.102)" stroke="#333" stroke-width="7.4"><use href="#fhead"/><g stroke="#8a8aff" stroke-width="8" fill="none"><path d="M-60 80 Q-70 150 -30 200 M60 80 Q70 150 30 200 M-20 130 Q0 200 20 130"/></g></g><g transform="translate(700.4 330) scale(-0.0573 0.0573)" stroke="#333" stroke-width="11"><use href="#shead"/><g stroke="#8a8aff" stroke-width="9" fill="none"><path d="M150 70 Q200 200 330 330 M200 50 Q260 180 380 260 M120 150 Q160 300 300 400 M250 120 Q200 200 180 300"/></g></g><g transform="translate(280 480) scale(0.13123)" stroke="#333" stroke-width="6" fill="none" stroke-linecap="round" stroke-linejoin="round"><path d="M182 312 Q160 230 215 140 Q280 62 370 62 Q460 62 525 140 Q580 230 555 320"/><path d="M182 312 Q205 250 240 232 Q370 215 500 235 Q535 260 555 320"/><path d="M182 312 Q185 400 198 462 Q215 540 255 605 Q280 640 310 660 M555 320 Q556 400 545 460 Q530 540 495 600 Q470 640 440 660"/><path d="M182 350 Q158 345 160 385 Q165 440 180 462 Q190 472 198 466 M557 340 Q582 335 580 380 Q575 430 560 455 Q552 462 546 458"/><path d="M245 312 Q285 290 330 305 M405 305 Q450 290 497 308"/><path d="M245 358 Q285 335 328 358 Q285 385 245 358Z M408 358 Q450 335 492 358 Q450 385 408 358Z"/><circle cx="300" cy="360" r="15" fill="#bbb" stroke-width="5"/><circle cx="436" cy="358" r="15" fill="#bbb" stroke-width="5"/><circle cx="300" cy="360" r="6" fill="#333" stroke="none"/><circle cx="436" cy="358" r="6" fill="#333" stroke="none"/><path d="M355 368 Q352 420 348 455 Q340 470 325 465 Q335 490 352 488 M388 368 Q392 420 398 452 Q408 470 425 462 Q418 488 402 486 M362 505 L364 520 M384 505 L382 520"/><path d="M312 462 Q295 490 287 520 M437 462 Q452 490 460 520"/><path d="M330 545 Q355 525 375 532 Q395 525 420 545 Q375 585 330 545Z M335 546 Q375 552 416 546"/><path d="M248 608 L240 645 M500 608 L508 645"/></g><g stroke="#111" stroke-width="1.1" fill="none"><path d="M453 533 Q455 525 467.5 524.5 Q480 525 482.5 533 Q480 541.5 467.5 542 Q455 541.5 453 533Z"/><path d="M503.5 533 Q506 525 518.2 524.5 Q530.5 525 532.7 533 Q530.5 541.5 518.2 542 Q506 541.5 503.5 533Z"/></g><g stroke="#111" stroke-width="1.6" fill="none"><path d="M615 534 Q622 511 654 510.5 Q686 511 693 534 Q686 558 654 558.5 Q622 558 615 534Z"/><path d="M691 531 Q696 534 694.5 538 Q693 541 690 540.5" stroke-width="1.1"/></g></svg><div class="sb" style="left:491px;top:0px;width:12px;height:260px"><div class="sbt" style="top:13px;height:234px"></div><div class="sbarrow up" style="left:0;top:0;width:12px;height:13px"><i></i></div><div class="sbarrow dn" style="left:0;top:247px;width:12px;height:13px"><i></i></div><div class="sbthumb" style="left:0;top:13px;width:11px;height:35px"></div></div></div></div>
<svg class="abs" style="left:0;top:0;pointer-events:none" width="898" height="684" viewBox="1 1 898 684"><path d="M437.3 417.3 L349.7 173.5" stroke="#fb0007" stroke-width="4.2" fill="none"/><path d="M348 168.5 L356.3 173 L344 177.5 Z" fill="#fb0007"/></svg>
</div>
</body>
</html>
